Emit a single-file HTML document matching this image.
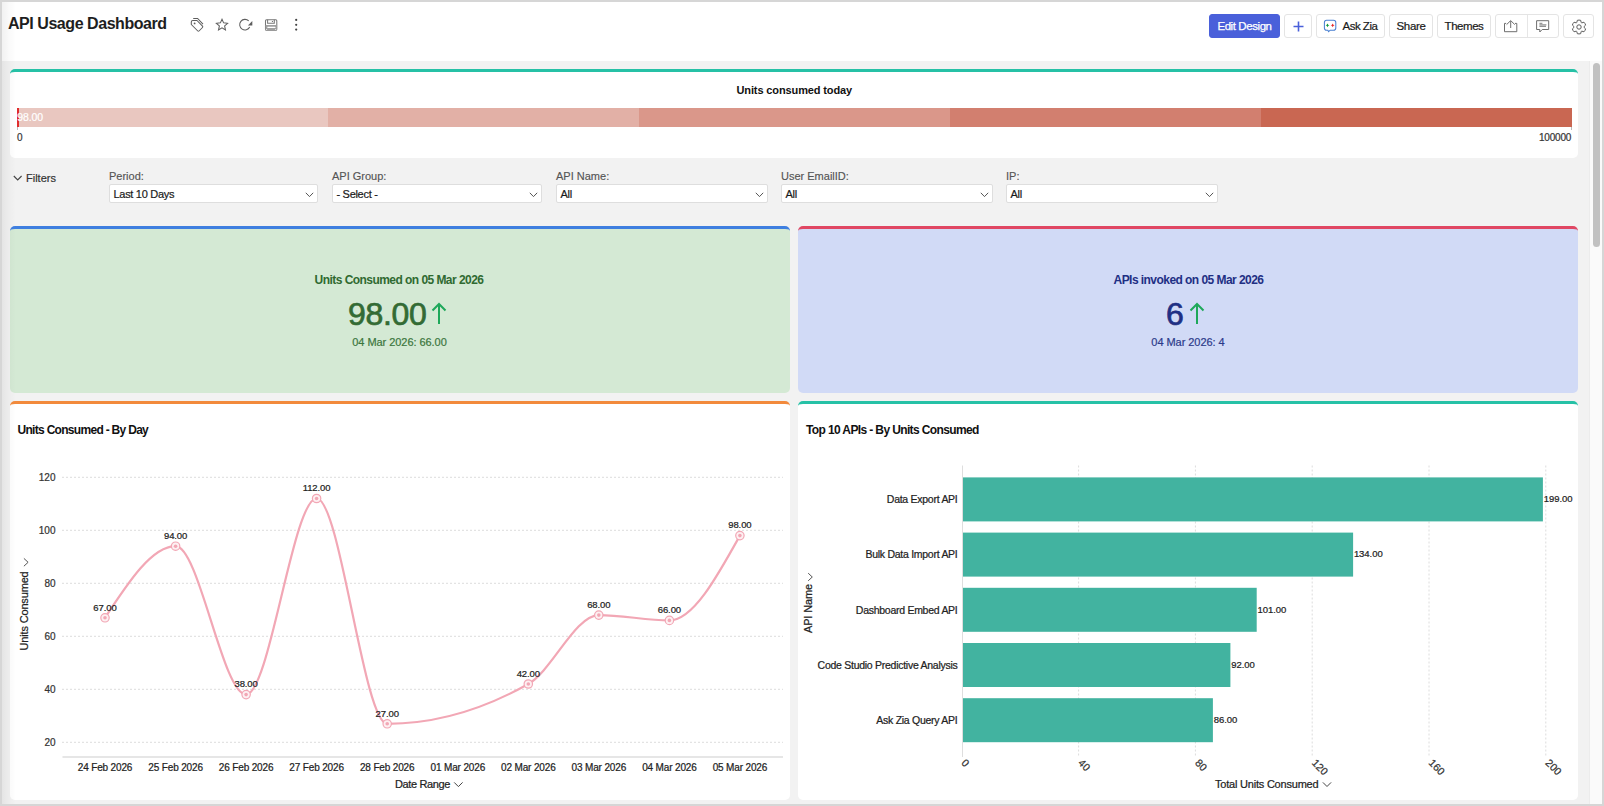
<!DOCTYPE html>
<html><head><meta charset="utf-8">
<style>
*{box-sizing:border-box;margin:0;padding:0}
html,body{width:1604px;height:806px;overflow:hidden;background:#fff}
body{font-family:"Liberation Sans",sans-serif;color:#222;position:relative}
.a{position:absolute;white-space:nowrap}
.ts{-webkit-text-stroke:0.2px currentColor}
#frame{position:absolute;left:0;top:0;width:1604px;height:806px;border:2px solid #d6d6d6;pointer-events:none;z-index:50}
#content{position:absolute;left:2px;top:61px;width:1587px;height:743px;background:#f2f2f2}
#track{position:absolute;left:1589px;top:61px;width:13px;height:743px;background:#fafafa;border-left:1px solid #ececec}
#thumb{position:absolute;left:1593px;top:63px;width:7px;height:184px;border-radius:4px;background:#c1c1c1}
.w{position:absolute;background:#fff;border-radius:5px;overflow:hidden;border-top:3px solid}
.btn{position:absolute;top:14px;height:24px;border:1px solid #e4e4e4;border-radius:3px;background:#fff;font-size:12px;color:#1a1a1a;text-align:center;line-height:22px;-webkit-text-stroke:0.2px currentColor}
.sel{position:absolute;top:184px;height:19px;width:209px;background:#fff;border:1px solid #dedede;border-radius:2px;font-size:11px;color:#1a1a1a;line-height:18px;padding-left:3.5px;letter-spacing:-0.3px;-webkit-text-stroke:0.2px currentColor}
.sel svg{position:absolute;right:3.5px;top:6.5px}
.flab{position:absolute;top:170px;font-size:11px;color:#555;-webkit-text-stroke:0.15px currentColor}
</style></head><body>
<div id="frame"></div>
<div class="a" style="left:2px;top:2px;width:14px;height:802px;background:linear-gradient(to right,rgba(0,0,0,0.055),rgba(0,0,0,0.02) 55%,rgba(0,0,0,0));z-index:49"></div>
<!-- header -->
<div class="a" style="left:8px;top:14.5px;font-size:16px;font-weight:700;color:#1e1e1e;letter-spacing:-0.45px">API Usage Dashboard</div>
<!-- header icons -->
<svg class="a" style="left:185px;top:12px" width="120" height="25" viewBox="185 12 120 25" fill="none" stroke="#5e5e5e" stroke-width="1.05">
  <path d="M191.3,22 Q191.3,20.5 192.8,20.5 L197,20.5 L202.5,26.2 Q203.1,26.9 202.5,27.5 L199,31 Q198.4,31.6 197.8,31 L191.3,24.5 Z" stroke-linejoin="round"/>
  <path d="M193.2,18.4 L197.6,18.4 L203,24.1"/>
  <circle cx="194.6" cy="23.4" r="0.9" fill="#5e5e5e" stroke="none"/>
  <path d="M222.00,19.20 L223.62,22.88 L227.61,23.28 L224.62,25.95 L225.47,29.87 L222.00,27.85 L218.53,29.87 L219.38,25.95 L216.39,23.28 L220.38,22.88 Z" stroke-linejoin="miter"/>
  <path d="M248.7,20.9 A5.3,5.3 0 1 0 249.7,27.1"/>
  <path d="M252.3,21 L252.3,25.4 L247.9,25.4 Z" fill="#5e5e5e" stroke="none"/>
  <rect x="265.5" y="19.7" width="11.3" height="10.6" rx="1" stroke="#777"/>
  <path d="M267.6,19.7 V23.3 H274.3 V19.7" stroke="#777"/>
  <circle cx="272.4" cy="21.5" r="0.6" fill="#555" stroke="none"/>
  <rect x="265.5" y="25" width="11.3" height="5.3" fill="#a0a0a0" stroke="none"/>
  <rect x="267.3" y="26.8" width="8.2" height="1.2" rx="0.5" fill="#fff" stroke="none"/>
  <circle cx="266.6" cy="29.4" r="0.5" fill="#fff" stroke="none"/><circle cx="275.7" cy="29.4" r="0.5" fill="#fff" stroke="none"/>
  <circle cx="296.2" cy="19.9" r="1.1" fill="#444" stroke="none"/>
  <circle cx="296.2" cy="24.8" r="1.1" fill="#444" stroke="none"/>
  <circle cx="296.2" cy="29.6" r="1.1" fill="#444" stroke="none"/>
</svg>
<!-- header buttons -->
<div class="btn" style="left:1209px;width:71px;background:#4a60da;border-color:#4a60da;color:#fff;font-size:11.5px;letter-spacing:-0.42px;-webkit-text-stroke:0.25px #fff">Edit Design</div>
<div class="btn" style="left:1284px;width:28px"><svg style="position:absolute;left:8px;top:6px" width="11" height="11"><path d="M5.5,0.5 V10.5 M0.5,5.5 H10.5" stroke="#4a60da" stroke-width="1.6"/></svg></div>
<div class="btn" style="left:1316px;width:69px;text-align:left;padding-left:25.5px;font-size:11.5px;letter-spacing:-0.5px">Ask Zia
  <svg style="position:absolute;left:-1px;top:-1px" width="30" height="24" viewBox="1316 14 30 24"><path d="M1326.6,20.3 H1333.5 Q1335.8,20.3 1335.8,22.6 V27.9 Q1335.8,30.2 1333.5,30.2 H1330.2 L1328.6,31.6 L1327.8,30.2 H1326.6 Q1324.4,30.2 1324.4,27.9 V22.6 Q1324.4,20.3 1326.6,20.3 Z" fill="#fff" stroke="#4a80d2" stroke-width="1.05"/><path d="M1327.5,23.4 L1328.5,25.3 L1327.5,27.2 L1326.4,25.3 Z M1325.6,25.3 L1327.5,24.4 L1329.4,25.3 L1327.5,26.2 Z" fill="#129a3d"/><path d="M1332.7,23.4 L1333.7,25.3 L1332.7,27.2 L1331.6,25.3 Z M1330.8,25.3 L1332.7,24.4 L1334.6,25.3 L1332.7,26.2 Z" fill="#e82a2a"/></svg></div>
<div class="btn" style="left:1389px;width:44px;font-size:11.5px;letter-spacing:-0.35px">Share</div>
<div class="btn" style="left:1437px;width:54px;font-size:11.5px;letter-spacing:-0.45px">Themes</div>
<div class="btn" style="left:1495px;width:64px">
  <div style="position:absolute;left:30.5px;top:0;width:1px;height:22px;background:#e6e6e6"></div>
  <svg style="position:absolute;left:0;top:0" width="62" height="22" viewBox="1496 15 62 22" fill="none" stroke="#6e6e6e" stroke-width="1"><path d="M1506.2,23.4 H1504.5 V31.7 H1516.8 V23.4 H1515"/><path d="M1510.7,28 V21 M1506.6,24.6 L1510.7,20.6 L1514.8,24.6"/>
  <path d="M1536.6,20.7 H1548.7 V29.5 H1542.2 L1539.8,32 V29.5 H1536.6 Z"/><path d="M1539.4,23.3 H1542.4" stroke-width="0.9"/><path d="M1539.4,24.9 H1546.4 M1539.4,26.3 H1546" stroke-width="1" stroke="#777"/></svg>
</div>
<div class="btn" style="left:1563px;width:31px">
  <svg style="position:absolute;left:6.5px;top:3.5px" width="16" height="16" viewBox="0 0 16 16" fill="none" stroke="#5c5c5c" stroke-width="1" stroke-linejoin="round"><path d="M5.81,3.51 L6.33,1.30 A6.90,6.90 0 0 1 9.67,1.30 L10.19,3.51 A5.00,5.00 0 0 1 10.80,3.85 L12.96,3.21 A6.90,6.90 0 0 1 14.63,6.10 L12.99,7.65 A5.00,5.00 0 0 1 12.99,8.35 L14.63,9.90 A6.90,6.90 0 0 1 12.96,12.79 L10.80,12.15 A5.00,5.00 0 0 1 10.19,12.49 L9.67,14.70 A6.90,6.90 0 0 1 6.33,14.70 L5.81,12.49 A5.00,5.00 0 0 1 5.20,12.15 L3.04,12.79 A6.90,6.90 0 0 1 1.37,9.90 L3.01,8.35 A5.00,5.00 0 0 1 3.01,7.65 L1.37,6.10 A6.90,6.90 0 0 1 3.04,3.21 L5.20,3.85 A5.00,5.00 0 0 1 5.81,3.51 Z"/><circle cx="8" cy="8" r="2.2"/></svg>
</div>

<div id="content"></div>
<div id="track"></div>
<div id="thumb"></div>

<!-- gauge widget -->
<div class="w" style="left:10px;top:69px;width:1568px;height:89px;border-top-color:#26c1a6">
</div>
<div class="a" style="left:736.5px;top:84px;font-size:11px;font-weight:700;color:#111;letter-spacing:-0.12px">Units consumed today</div>
<div class="a" style="left:17px;top:108px;width:311px;height:19px;background:#e9c7c0"></div>
<div class="a" style="left:328px;top:108px;width:311px;height:19px;background:#e2b0a6"></div>
<div class="a" style="left:639px;top:108px;width:311px;height:19px;background:#da978a"></div>
<div class="a" style="left:950px;top:108px;width:311px;height:19px;background:#d27f6f"></div>
<div class="a" style="left:1261px;top:108px;width:311px;height:19px;background:#c96752"></div>
<div class="a" style="left:17px;top:127px;width:1px;height:3px;background:#bbb"></div>
<div class="a" style="left:1571px;top:127px;width:1px;height:3px;background:#bbb"></div>
<div class="a" style="left:17px;top:108px;width:2px;height:19px;background:#e02c2c"></div>
<div class="a" style="left:17.2px;top:110.5px;font-size:10.5px;color:#fff;letter-spacing:-0.12px;-webkit-text-stroke:0.2px #fff">98.00</div>

<div class="a ts" style="left:17px;top:132px;font-size:10px;color:#333">0</div>
<div class="a ts" style="left:1539px;top:132px;font-size:10px;color:#333;letter-spacing:-0.2px">100000</div>

<!-- filters -->
<svg class="a" style="left:13.3px;top:174.5px" width="10" height="7"><path d="M0.8,1 L4.7,5 L8.6,1" fill="none" stroke="#444" stroke-width="1.1"/></svg>
<div class="a ts" style="left:26px;top:172px;font-size:11px;color:#333">Filters</div>
<div class="flab" style="left:109px">Period:</div>
<div class="flab" style="left:332px">API Group:</div>
<div class="flab" style="left:556px">API Name:</div>
<div class="flab" style="left:781px">User EmailID:</div>
<div class="flab" style="left:1006px">IP:</div>
<div class="sel" style="left:109px">Last 10 Days<svg width="9" height="6"><path d="M0.8,0.8 L4.5,4.6 L8.2,0.8" fill="none" stroke="#555" stroke-width="1"/></svg></div>
<div class="sel" style="left:332px;width:210px">- Select -<svg width="9" height="6"><path d="M0.8,0.8 L4.5,4.6 L8.2,0.8" fill="none" stroke="#555" stroke-width="1"/></svg></div>
<div class="sel" style="left:556px;width:212px">All<svg width="9" height="6"><path d="M0.8,0.8 L4.5,4.6 L8.2,0.8" fill="none" stroke="#555" stroke-width="1"/></svg></div>
<div class="sel" style="left:781px;width:212px">All<svg width="9" height="6"><path d="M0.8,0.8 L4.5,4.6 L8.2,0.8" fill="none" stroke="#555" stroke-width="1"/></svg></div>
<div class="sel" style="left:1006px;width:212px">All<svg width="9" height="6"><path d="M0.8,0.8 L4.5,4.6 L8.2,0.8" fill="none" stroke="#555" stroke-width="1"/></svg></div>

<!-- KPI widgets -->
<div class="w" style="left:10px;top:226px;width:779.5px;height:166.5px;background:#d4e9d4;border-top-color:#3f7fe0">
</div>
<div class="w" style="left:798px;top:226px;width:780px;height:166.5px;background:#d1daf6;border-top-color:#e04763">
</div>
<div class="a" style="left:314px;top:273px;width:170px;text-align:center;font-size:12px;font-weight:700;color:#2f6a31;letter-spacing:-0.55px">Units Consumed on 05 Mar 2026</div>
<div class="a" style="left:348px;top:296px;font-size:32px;color:#336b34;letter-spacing:-0.35px;-webkit-text-stroke:0.7px #336b34">98.00</div>
<svg class="a" style="left:431px;top:302px" width="16" height="23"><path d="M8,22 V2 M1.5,8.5 L8,2 L14.5,8.5" fill="none" stroke="#1ea85a" stroke-width="2"/></svg>
<div class="a" style="left:352px;top:336px;width:95px;text-align:center;font-size:11px;color:#3b763d;-webkit-text-stroke:0.2px currentColor;letter-spacing:-0.05px">04 Mar 2026: 66.00</div>

<div class="a" style="left:1112px;top:273px;width:153px;text-align:center;font-size:12px;font-weight:700;color:#1f2f84;letter-spacing:-0.55px">APIs invoked on 05 Mar 2026</div>
<div class="a" style="left:1166px;top:296px;font-size:32px;color:#1f2f84;-webkit-text-stroke:0.7px #1f2f84">6</div>
<svg class="a" style="left:1189px;top:302px" width="16" height="23"><path d="M8,22 V2 M1.5,8.5 L8,2 L14.5,8.5" fill="none" stroke="#1ea85a" stroke-width="2"/></svg>
<div class="a" style="left:1151px;top:336px;width:74px;text-align:center;font-size:11px;color:#2c3a8a;-webkit-text-stroke:0.2px currentColor;letter-spacing:-0.05px">04 Mar 2026: 4</div>

<!-- chart widgets -->
<div class="w" style="left:10px;top:401px;width:779.5px;height:399px;border-top-color:#f28a3c">
</div>
<div class="w" style="left:798px;top:401px;width:780px;height:399px;border-top-color:#26c1a6">
</div>

<!--CHARTS-->
<svg class="a" style="left:0;top:0" width="800" height="806" viewBox="0 0 800 806">
<text x="17.5" y="433.7" font-family="Liberation Sans" stroke="currentColor" stroke-width="0.22" font-size="12" font-weight="700" fill="#111" color="#111" style="stroke-width:0" letter-spacing="-0.7">Units Consumed - By Day</text>
<line x1="62" y1="477.3" x2="783" y2="477.3" stroke="#dcdcdc" stroke-width="1" stroke-dasharray="2,2"/>
<text x="55.5" y="481.0" font-family="Liberation Sans" stroke="currentColor" stroke-width="0.22" font-size="10" fill="#333" color="#333" text-anchor="end">120</text>
<line x1="62" y1="530.3" x2="783" y2="530.3" stroke="#dcdcdc" stroke-width="1" stroke-dasharray="2,2"/>
<text x="55.5" y="534.0" font-family="Liberation Sans" stroke="currentColor" stroke-width="0.22" font-size="10" fill="#333" color="#333" text-anchor="end">100</text>
<line x1="62" y1="583.3" x2="783" y2="583.3" stroke="#dcdcdc" stroke-width="1" stroke-dasharray="2,2"/>
<text x="55.5" y="587.0" font-family="Liberation Sans" stroke="currentColor" stroke-width="0.22" font-size="10" fill="#333" color="#333" text-anchor="end">80</text>
<line x1="62" y1="636.3" x2="783" y2="636.3" stroke="#dcdcdc" stroke-width="1" stroke-dasharray="2,2"/>
<text x="55.5" y="640.0" font-family="Liberation Sans" stroke="currentColor" stroke-width="0.22" font-size="10" fill="#333" color="#333" text-anchor="end">60</text>
<line x1="62" y1="689.3" x2="783" y2="689.3" stroke="#dcdcdc" stroke-width="1" stroke-dasharray="2,2"/>
<text x="55.5" y="693.0" font-family="Liberation Sans" stroke="currentColor" stroke-width="0.22" font-size="10" fill="#333" color="#333" text-anchor="end">40</text>
<line x1="62" y1="742.3" x2="783" y2="742.3" stroke="#dcdcdc" stroke-width="1" stroke-dasharray="2,2"/>
<text x="55.5" y="746.0" font-family="Liberation Sans" stroke="currentColor" stroke-width="0.22" font-size="10" fill="#333" color="#333" text-anchor="end">20</text>
<rect x="62.5" y="756" width="720.5" height="2" fill="#e6e6e6"/>
<text x="105.0" y="771.3" font-family="Liberation Sans" stroke="currentColor" stroke-width="0.22" font-size="10" fill="#222" color="#222" text-anchor="middle" letter-spacing="-0.15">24 Feb 2026</text>
<text x="175.6" y="771.3" font-family="Liberation Sans" stroke="currentColor" stroke-width="0.22" font-size="10" fill="#222" color="#222" text-anchor="middle" letter-spacing="-0.15">25 Feb 2026</text>
<text x="246.1" y="771.3" font-family="Liberation Sans" stroke="currentColor" stroke-width="0.22" font-size="10" fill="#222" color="#222" text-anchor="middle" letter-spacing="-0.15">26 Feb 2026</text>
<text x="316.6" y="771.3" font-family="Liberation Sans" stroke="currentColor" stroke-width="0.22" font-size="10" fill="#222" color="#222" text-anchor="middle" letter-spacing="-0.15">27 Feb 2026</text>
<text x="387.2" y="771.3" font-family="Liberation Sans" stroke="currentColor" stroke-width="0.22" font-size="10" fill="#222" color="#222" text-anchor="middle" letter-spacing="-0.15">28 Feb 2026</text>
<text x="457.8" y="771.3" font-family="Liberation Sans" stroke="currentColor" stroke-width="0.22" font-size="10" fill="#222" color="#222" text-anchor="middle" letter-spacing="-0.15">01 Mar 2026</text>
<text x="528.3" y="771.3" font-family="Liberation Sans" stroke="currentColor" stroke-width="0.22" font-size="10" fill="#222" color="#222" text-anchor="middle" letter-spacing="-0.15">02 Mar 2026</text>
<text x="598.8" y="771.3" font-family="Liberation Sans" stroke="currentColor" stroke-width="0.22" font-size="10" fill="#222" color="#222" text-anchor="middle" letter-spacing="-0.15">03 Mar 2026</text>
<text x="669.4" y="771.3" font-family="Liberation Sans" stroke="currentColor" stroke-width="0.22" font-size="10" fill="#222" color="#222" text-anchor="middle" letter-spacing="-0.15">04 Mar 2026</text>
<text x="739.9" y="771.3" font-family="Liberation Sans" stroke="currentColor" stroke-width="0.22" font-size="10" fill="#222" color="#222" text-anchor="middle" letter-spacing="-0.15">05 Mar 2026</text>
<text x="395" y="787.7" font-family="Liberation Sans" stroke="currentColor" stroke-width="0.22" font-size="11" fill="#222" color="#222" letter-spacing="-0.38">Date Range</text>
<path d="M454.2,782.4 L458.4,786.6 L462.6,782.4" fill="none" stroke="#444" stroke-width="1"/>
<text transform="translate(27.7,650.5) rotate(-90)" font-family="Liberation Sans" stroke="currentColor" stroke-width="0.22" font-size="11" fill="#222" color="#222" letter-spacing="-0.16">Units Consumed</text>
<path d="M23.9,558.4 L28.1,562.3 L23.9,566.2" fill="none" stroke="#555" stroke-width="1"/>
<path d="M105.0,617.8 C128.5,582.0 152.0,546.2 175.6,546.2 C199.1,546.2 222.6,694.6 246.1,694.6 C269.6,694.6 293.1,498.5 316.6,498.5 C340.2,498.5 363.7,723.8 387.2,723.8 C434.2,723.8 481.3,710.5 528.3,684.0 C551.8,670.8 575.3,615.1 598.8,615.1 C622.4,615.1 645.9,620.4 669.4,620.4 C692.9,620.4 716.4,578.0 739.9,535.6" fill="none" stroke="#f2a7b5" stroke-width="2.2"/>
<circle cx="105.0" cy="617.8" r="4.2" fill="#fdf0f2" stroke="#f2a7b5" stroke-width="1.2"/><circle cx="105.0" cy="617.8" r="1.8" fill="#f2a7b5"/>
<text x="105.0" y="610.6" font-family="Liberation Sans" stroke="currentColor" stroke-width="0.22" font-size="9.5" fill="#222" color="#222" text-anchor="middle" letter-spacing="-0.1">67.00</text>
<circle cx="175.6" cy="546.2" r="4.2" fill="#fdf0f2" stroke="#f2a7b5" stroke-width="1.2"/><circle cx="175.6" cy="546.2" r="1.8" fill="#f2a7b5"/>
<text x="175.6" y="539.0" font-family="Liberation Sans" stroke="currentColor" stroke-width="0.22" font-size="9.5" fill="#222" color="#222" text-anchor="middle" letter-spacing="-0.1">94.00</text>
<circle cx="246.1" cy="694.6" r="4.2" fill="#fdf0f2" stroke="#f2a7b5" stroke-width="1.2"/><circle cx="246.1" cy="694.6" r="1.8" fill="#f2a7b5"/>
<text x="246.1" y="687.4" font-family="Liberation Sans" stroke="currentColor" stroke-width="0.22" font-size="9.5" fill="#222" color="#222" text-anchor="middle" letter-spacing="-0.1">38.00</text>
<circle cx="316.6" cy="498.5" r="4.2" fill="#fdf0f2" stroke="#f2a7b5" stroke-width="1.2"/><circle cx="316.6" cy="498.5" r="1.8" fill="#f2a7b5"/>
<text x="316.6" y="491.3" font-family="Liberation Sans" stroke="currentColor" stroke-width="0.22" font-size="9.5" fill="#222" color="#222" text-anchor="middle" letter-spacing="-0.1">112.00</text>
<circle cx="387.2" cy="723.8" r="4.2" fill="#fdf0f2" stroke="#f2a7b5" stroke-width="1.2"/><circle cx="387.2" cy="723.8" r="1.8" fill="#f2a7b5"/>
<text x="387.2" y="716.6" font-family="Liberation Sans" stroke="currentColor" stroke-width="0.22" font-size="9.5" fill="#222" color="#222" text-anchor="middle" letter-spacing="-0.1">27.00</text>
<circle cx="528.3" cy="684.0" r="4.2" fill="#fdf0f2" stroke="#f2a7b5" stroke-width="1.2"/><circle cx="528.3" cy="684.0" r="1.8" fill="#f2a7b5"/>
<text x="528.3" y="676.8" font-family="Liberation Sans" stroke="currentColor" stroke-width="0.22" font-size="9.5" fill="#222" color="#222" text-anchor="middle" letter-spacing="-0.1">42.00</text>
<circle cx="598.8" cy="615.1" r="4.2" fill="#fdf0f2" stroke="#f2a7b5" stroke-width="1.2"/><circle cx="598.8" cy="615.1" r="1.8" fill="#f2a7b5"/>
<text x="598.8" y="607.9" font-family="Liberation Sans" stroke="currentColor" stroke-width="0.22" font-size="9.5" fill="#222" color="#222" text-anchor="middle" letter-spacing="-0.1">68.00</text>
<circle cx="669.4" cy="620.4" r="4.2" fill="#fdf0f2" stroke="#f2a7b5" stroke-width="1.2"/><circle cx="669.4" cy="620.4" r="1.8" fill="#f2a7b5"/>
<text x="669.4" y="613.2" font-family="Liberation Sans" stroke="currentColor" stroke-width="0.22" font-size="9.5" fill="#222" color="#222" text-anchor="middle" letter-spacing="-0.1">66.00</text>
<circle cx="739.9" cy="535.6" r="4.2" fill="#fdf0f2" stroke="#f2a7b5" stroke-width="1.2"/><circle cx="739.9" cy="535.6" r="1.8" fill="#f2a7b5"/>
<text x="739.9" y="528.4" font-family="Liberation Sans" stroke="currentColor" stroke-width="0.22" font-size="9.5" fill="#222" color="#222" text-anchor="middle" letter-spacing="-0.1">98.00</text>
</svg>
<svg class="a" style="left:798px;top:0" width="806" height="806" viewBox="798 0 806 806">
<text x="806" y="434.2" font-family="Liberation Sans" stroke="currentColor" stroke-width="0.22" font-size="12" font-weight="700" fill="#111" color="#111" style="stroke-width:0" letter-spacing="-0.62">Top 10 APIs - By Units Consumed</text>
<line x1="1078.6" y1="465.5" x2="1078.6" y2="757" stroke="#dcdcdc" stroke-width="1" stroke-dasharray="2,2"/>
<line x1="1195.4" y1="465.5" x2="1195.4" y2="757" stroke="#dcdcdc" stroke-width="1" stroke-dasharray="2,2"/>
<line x1="1312.2" y1="465.5" x2="1312.2" y2="757" stroke="#dcdcdc" stroke-width="1" stroke-dasharray="2,2"/>
<line x1="1429.0" y1="465.5" x2="1429.0" y2="757" stroke="#dcdcdc" stroke-width="1" stroke-dasharray="2,2"/>
<line x1="1545.8" y1="465.5" x2="1545.8" y2="757" stroke="#dcdcdc" stroke-width="1" stroke-dasharray="2,2"/>
<line x1="962.5" y1="465.5" x2="962.5" y2="757" stroke="#dedede" stroke-width="1"/>
<rect x="963" y="477.4" width="579.9" height="44" fill="#42b3a0"/>
<text x="957.5" y="503.2" font-family="Liberation Sans" stroke="currentColor" stroke-width="0.22" font-size="10.5" fill="#222" color="#222" text-anchor="end" letter-spacing="-0.27">Data Export API</text>
<text x="1543.7" y="502.1" font-family="Liberation Sans" stroke="currentColor" stroke-width="0.22" font-size="9.5" fill="#222" color="#222" letter-spacing="-0.05">199.00</text>
<rect x="963" y="532.6" width="390.1" height="44" fill="#42b3a0"/>
<text x="957.5" y="558.4" font-family="Liberation Sans" stroke="currentColor" stroke-width="0.22" font-size="10.5" fill="#222" color="#222" text-anchor="end" letter-spacing="-0.27">Bulk Data Import API</text>
<text x="1353.9" y="557.3" font-family="Liberation Sans" stroke="currentColor" stroke-width="0.22" font-size="9.5" fill="#222" color="#222" letter-spacing="-0.05">134.00</text>
<rect x="963" y="587.8" width="293.7" height="44" fill="#42b3a0"/>
<text x="957.5" y="613.6" font-family="Liberation Sans" stroke="currentColor" stroke-width="0.22" font-size="10.5" fill="#222" color="#222" text-anchor="end" letter-spacing="-0.27">Dashboard Embed API</text>
<text x="1257.5" y="612.5" font-family="Liberation Sans" stroke="currentColor" stroke-width="0.22" font-size="9.5" fill="#222" color="#222" letter-spacing="-0.05">101.00</text>
<rect x="963" y="643.0" width="267.4" height="44" fill="#42b3a0"/>
<text x="957.5" y="668.8" font-family="Liberation Sans" stroke="currentColor" stroke-width="0.22" font-size="10.5" fill="#222" color="#222" text-anchor="end" letter-spacing="-0.27">Code Studio Predictive Analysis</text>
<text x="1231.2" y="667.7" font-family="Liberation Sans" stroke="currentColor" stroke-width="0.22" font-size="9.5" fill="#222" color="#222" letter-spacing="-0.05">92.00</text>
<rect x="963" y="698.2" width="249.9" height="44" fill="#42b3a0"/>
<text x="957.5" y="724.0" font-family="Liberation Sans" stroke="currentColor" stroke-width="0.22" font-size="10.5" fill="#222" color="#222" text-anchor="end" letter-spacing="-0.27">Ask Zia Query API</text>
<text x="1213.7" y="722.9" font-family="Liberation Sans" stroke="currentColor" stroke-width="0.22" font-size="9.5" fill="#222" color="#222" letter-spacing="-0.05">86.00</text>
<text transform="translate(960.8,763.6) rotate(45)" font-family="Liberation Sans" stroke="currentColor" stroke-width="0.22" font-size="10.5" fill="#333" color="#333">0</text>
<text transform="translate(1077.6,763.6) rotate(45)" font-family="Liberation Sans" stroke="currentColor" stroke-width="0.22" font-size="10.5" fill="#333" color="#333">40</text>
<text transform="translate(1194.4,763.6) rotate(45)" font-family="Liberation Sans" stroke="currentColor" stroke-width="0.22" font-size="10.5" fill="#333" color="#333">80</text>
<text transform="translate(1311.2,763.6) rotate(45)" font-family="Liberation Sans" stroke="currentColor" stroke-width="0.22" font-size="10.5" fill="#333" color="#333">120</text>
<text transform="translate(1428.0,763.6) rotate(45)" font-family="Liberation Sans" stroke="currentColor" stroke-width="0.22" font-size="10.5" fill="#333" color="#333">160</text>
<text transform="translate(1544.8,763.6) rotate(45)" font-family="Liberation Sans" stroke="currentColor" stroke-width="0.22" font-size="10.5" fill="#333" color="#333">200</text>
<text x="1215" y="787.6" font-family="Liberation Sans" stroke="currentColor" stroke-width="0.22" font-size="11" fill="#222" color="#222" letter-spacing="-0.21">Total Units Consumed</text>
<path d="M1322.9,782.4 L1327,786.5 L1331.1,782.4" fill="none" stroke="#444" stroke-width="1"/>
<text transform="translate(812.3,633) rotate(-90)" font-family="Liberation Sans" stroke="currentColor" stroke-width="0.22" font-size="11" fill="#222" color="#222" letter-spacing="-0.16">API Name</text>
<path d="M808.2,573.2 L812.3,577 L808.2,580.8" fill="none" stroke="#555" stroke-width="1"/>
</svg>
<!--/CHARTS-->
</body></html>
